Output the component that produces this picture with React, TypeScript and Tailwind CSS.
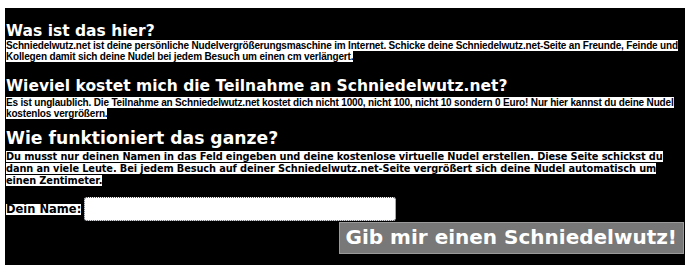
import React from "react";

const verdana = "font-['DejaVu_Sans',Verdana,sans-serif]";
const arial = "font-['Liberation_Sans',Arial,sans-serif]";

const Heading = ({ children, className = "" }: { children: React.ReactNode; className?: string }) => (
  <h2 className={`${verdana} font-bold text-white ${className}`}>{children}</h2>
);

const App = () => {
  return (
    <div className="bg-white min-h-[278px] pt-[8px] px-[5px]">
      <div className="bg-black px-[1px] pt-[16px] pb-[11px]">
        <Heading className="text-[15.5px] leading-[14px]">Was ist das hier?</Heading>
        <p className={`${arial} text-[10px] leading-[normal] tracking-[-0.17px] font-bold mt-[2px]`}>
          <span className="bg-white text-black">
            Schniedelwutz.net ist deine persönliche Nudelvergrößerungsmaschine im Internet. Schicke deine
            Schniedelwutz.net-Seite an Freunde, Feinde und Kollegen damit sich deine Nudel bei jedem Besuch um
            einen cm verlängert.
          </span>
        </p>

        <Heading className="text-[15.5px] leading-[14px] mt-[17px]">
          Wieviel kostet mich die Teilnahme an Schniedelwutz.net?
        </Heading>
        <p className={`${arial} text-[10px] leading-[normal] tracking-[-0.17px] font-bold mt-[4px]`}>
          <span className="bg-white text-black">
            Es ist unglaublich. Die Teilnahme an Schniedelwutz.net kostet dich nicht 1000, nicht 100, nicht 10
            sondern 0 Euro! Nur hier kannst du deine Nudel kostenlos vergrößern.
          </span>
        </p>

        <Heading className="text-[17.2px] leading-[15px] mt-[12px]">Wie funktioniert das ganze?</Heading>
        <p className={`${verdana} text-[9.8px] leading-[12px] tracking-[-0.11px] font-bold mt-[5px]`}>
          <span className="bg-white text-black">
            Du musst nur deinen Namen in das Feld eingeben und deine kostenlose virtuelle Nudel erstellen. Diese
            Seite schickst du dann an viele Leute. Bei jedem Besuch auf deiner Schniedelwutz.net-Seite vergrößert
            sich deine Nudel automatisch um einen Zentimeter.
          </span>
        </p>

        <div className="flex items-center mt-[10px]">
          <span className={`${verdana} text-[11.5px] leading-[11px] font-bold bg-white text-black`}>Dein Name:</span>
          <input
            type="text"
            className="ml-[3px] w-[312px] h-[24px] bg-white border border-dotted border-gray-600 rounded-[3px] outline-none"
          />
        </div>

        <div className="flex justify-end mt-[1px]">
          <button
            className={`${verdana} text-[20px] leading-[24px] font-bold text-white bg-[#787878] border border-[#9a9a9a] px-[6px] pt-[2px] pb-[4px]`}
          >
            Gib mir einen Schniedelwutz!
          </button>
        </div>
      </div>
    </div>
  );
};

export default App;
